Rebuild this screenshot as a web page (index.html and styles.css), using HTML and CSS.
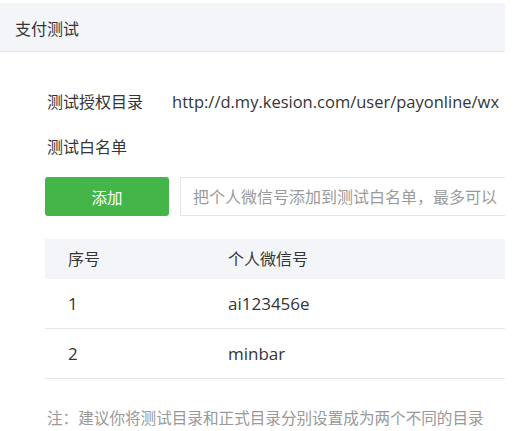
FILE: index.html
```html
<!DOCTYPE html>
<html lang="zh">
<head>
<meta charset="utf-8">
<link rel="stylesheet" href="styles.css">
</head>
<body>
<div class="page">
  <div class="header">支付测试</div>
  <div class="content">
    <div class="row-info">
      <span class="label">测试授权目录</span>
      <span class="url">http://d.my.kesion.com/user/payonline/wx</span>
    </div>
    <div class="label sub">测试白名单</div>
    <div class="add-row">
      <button class="btn">添加</button>
      <div class="input">把个人微信号添加到测试白名单，最多可以</div>
    </div>
    <div class="table">
      <div class="tr th"><span class="c1">序号</span><span class="c2">个人微信号</span></div>
      <div class="tr td"><span class="c1">1</span><span class="c2">ai123456e</span></div>
      <div class="tr td"><span class="c1">2</span><span class="c2">minbar</span></div>
    </div>
    <div class="note">注：建议你将测试目录和正式目录分别设置成为两个不同的目录</div>
  </div>
</div>
</body>
</html>
```
FILE: styles.css
```css
html, body { margin: 0; padding: 0; background: #fff; }
body {
  font-family: "Open Sans", "Noto Sans CJK SC", sans-serif;
  color: #353535;
  font-size: 16px;
}
.page {
  width: 505px;
  overflow: hidden;
  padding-top: 3px;
}
.header {
  height: 48px;
  line-height: 52px;
  background: #f4f5f9;
  border-bottom: 1px solid #e9eaef;
  padding-left: 15px;
  font-size: 16px;
  white-space: nowrap;
}
.content {
  padding-left: 45px;
}
.row-info {
  display: flex;
  align-items: baseline;
  white-space: nowrap;
  margin-top: 38px;
  line-height: 24px;
}
.label {
  padding-left: 2px;
  font-size: 16px;
}
.url {
  margin-left: 29px;
  font-size: 16.5px;
}
.sub {
  margin-top: 21px;
  line-height: 24px;
}
.add-row {
  display: flex;
  gap: 11px;
  margin-top: 18px;
  white-space: nowrap;
}
.btn {
  flex: none;
  width: 124px;
  height: 39px;
  border: none;
  border-radius: 3px;
  background: #44b549;
  color: #fff;
  font-family: "Noto Sans CJK SC", sans-serif;
  font-size: 15.5px;
  padding: 0;
}
.input {
  flex: none;
  width: 420px;
  height: 37px;
  line-height: 37px;
  border: 1px solid #e4e4e4;
  padding-left: 12px;
  color: #9a9a9a;
  font-size: 16px;
  font-family: "Noto Sans CJK SC", sans-serif;
}
.table {
  margin-top: 23px;
}
.tr {
  display: flex;
  height: 49px;
  line-height: 49px;
  border-bottom: 1px solid #e7e7eb;
  white-space: nowrap;
}
.td { font-size: 17px; }
.th {
  height: 40px;
  line-height: 40px;
  background: #f4f5f9;
  border-bottom: none;
  font-size: 16px;
}
.c1 { width: 160px; padding-left: 23px; flex: none; }
.c2 { flex: 1; }
.note {
  margin-top: 27px;
  color: #999;
  font-size: 15.6px;
  padding-left: 2px;
  white-space: nowrap;
}
```
